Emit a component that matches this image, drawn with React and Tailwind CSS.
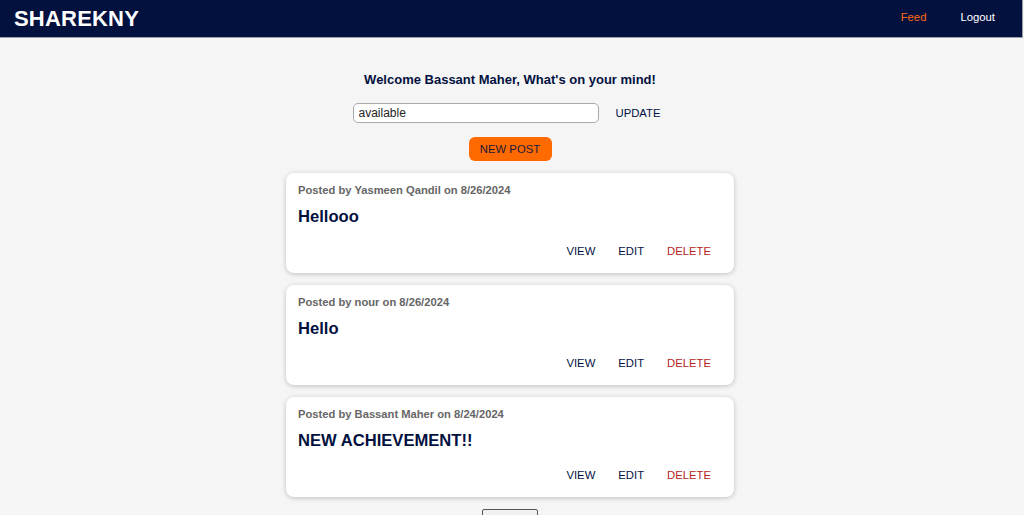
import React from 'react'

const posts = [
  { author: 'Yasmeen Qandil', date: '8/26/2024', title: 'Hellooo' },
  { author: 'nour', date: '8/26/2024', title: 'Hello' },
  { author: 'Bassant Maher', date: '8/24/2024', title: 'NEW ACHIEVEMENT!!' },
]

function PostCard({ post }) {
  return (
    <div className="w-[448px] h-[100px] bg-white rounded-lg shadow-[0_1px_5px_rgba(0,0,0,0.22)] px-3 pt-[10px]">
      <p className="text-[11.2px] leading-[14px] font-bold text-[#666]">
        Posted by {post.author} on {post.date}
      </p>
      <h3 className="mt-[9px] text-[16.6px] leading-[22px] font-bold text-[#03113f]">{post.title}</h3>
      <div className="mt-[15px] flex justify-end pr-[11px] gap-[23px] text-[11.3px] leading-[16px]">
        <button className="text-[#03113f]">VIEW</button>
        <button className="text-[#03113f]">EDIT</button>
        <button className="text-[#b3261e]">DELETE</button>
      </div>
    </div>
  )
}

export default function App() {
  return (
    <div className="min-h-screen bg-[#f5f5f5] font-['Liberation_Sans',Arial,sans-serif] overflow-hidden">
      <nav className="w-[1023px] h-[38px] bg-[#03113f] border-r border-b border-[#a0a0a8] flex items-center justify-between pl-[14px] pr-[27px]">
        <div className="text-white font-bold text-[22px] leading-none tracking-[0.2px]">SHAREKNY</div>
        <div className="flex items-center gap-[34px] text-[11.3px] -mt-[2px]">
          <a className="text-[#ff6a13]">Feed</a>
          <a className="text-white">Logout</a>
        </div>
      </nav>
      <main className="w-[1020px] flex flex-col items-center">
        <h2 className="mt-[33px] text-[13px] leading-[18px] font-bold text-[#03113f]">
          Welcome Bassant Maher, What's on your mind!
        </h2>
        <div className="mt-[14px] flex items-center gap-[17px] pr-[7px]">
          <input
            defaultValue="available"
            className="w-[246px] h-[20px] rounded-[5px] border border-[#a8a8b0] bg-white px-[5px] text-[12px] text-[#222] outline-none"
          />
          <button className="text-[11.3px] text-[#03113f]">UPDATE</button>
        </div>
        <button className="mt-[14px] w-[83px] h-[24px] rounded-[6px] bg-[#ff6a00] text-[11.3px] text-[#1c1a3a]">
          NEW POST
        </button>
        <div className="mt-[12px] flex flex-col gap-[12px]">
          {posts.map((p, i) => (
            <PostCard key={i} post={p} />
          ))}
        </div>
        <button className="mt-[12px] w-[56px] h-[22px] border border-[#555] bg-[#f0f0f0] text-[11.3px] leading-[12px] pt-[4px] text-[#111] rounded-[2px] self-center">
          Next
        </button>
      </main>
    </div>
  )
}
